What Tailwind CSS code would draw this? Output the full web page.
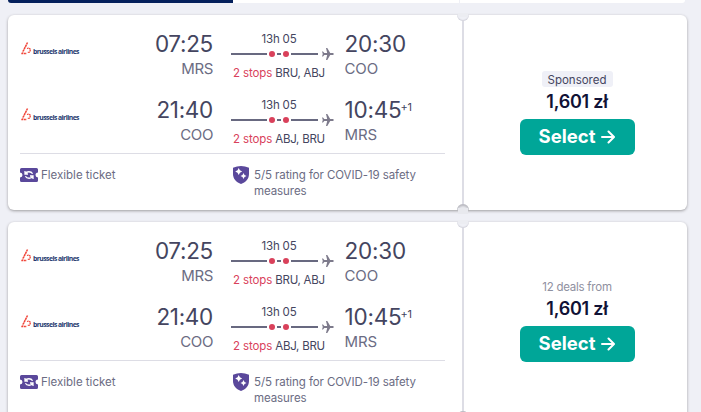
<!DOCTYPE html>
<html lang="en">
<head>
<meta charset="utf-8">
<title>Flights</title>
<script src="https://cdn.jsdelivr.net/npm/@tailwindcss/browser@4"></script>
</head>
<body class="h-[412px] overflow-hidden bg-[#eff0f6] font-[Inter,sans-serif] text-[#444560]">
<svg class="hidden">
  <symbol id="plane" viewBox="0 0 12 12"><path fill="#7d7a8b" d="M4 0h1.300l2.900 5H11l1 1-1 1H8.200L5.300 12H4l1.200-5H2.300L1 8.500H0L.8 6 0 3.500h1L2.300 5h2.900z"/></symbol>
  <symbol id="ticket" viewBox="0 0 18 14"><path fill="#5a489b" d="M1.500 0h15Q18 0 18 1.500v3a2.500 2.500 0 0 0 0 5v3q0 1.500-1.500 1.500h-15Q0 14 0 12.500v-3a2.500 2.500 0 0 0 0-5v-3Q0 0 1.500 0z"/><path fill="none" stroke="#fff" stroke-width="1.300" d="M5 3v3h3M5.300 5.700C6.500 3.300 11 2.900 12.600 5.800M13 11V8h-3M12.700 8.300C11.500 10.700 7 11.100 5.400 8.200"/></symbol>
  <symbol id="shield" viewBox="0 0 16 18"><path fill="#5a489b" d="M0 1.800Q4 0 8 0t8 1.800V8c0 5-3.500 8.500-8 10C3.500 16.500 0 13 0 8z"/><path fill="#fff" d="M5.700 2l1.200 2.300L9.200 5.500 6.900 6.700 5.700 9 4.500 6.700 2.200 5.500l2.300-1.200zM10.500 7l1 2 2 1-2 1-1 2-1-2-2-1 2-1z"/></symbol>
  <symbol id="brand" viewBox="0 0 11 13"><path fill="none" stroke="#f04438" stroke-width="1.500" stroke-dasharray="2.200 .4" d="M6.500.5L1.500 10.500"/><path fill="none" stroke="#f04438" stroke-width="1.300" stroke-dasharray="1.700 .4" d="M6 6.500C8.500 5.500 10 7 9 9S7.500 10.200 6.500 10.400"/><path fill="none" stroke="#f04438" stroke-width="1.700" stroke-dasharray="2 .6" d="M.3 11.500H5.800"/></symbol>
  <symbol id="arrow" viewBox="0 0 14 14"><path fill="none" stroke="#fff" stroke-width="2" stroke-linecap="round" stroke-linejoin="round" d="M1 7h11.500M7.500 1.500L13 7l-5.500 5.500"/></symbol>
</svg>

<div class="flex h-[3px] pl-2">
  <div class="w-[225px] rounded-bl-[3px] bg-[#04205c]"></div>
  <div class="w-[226px] bg-white"></div>
  <div class="w-[226px] rounded-br-[6px] border-l border-[#eff0f6] bg-white"></div>
</div>
<main id="results" class="mt-3 ml-2 flex w-[679px] flex-col gap-3"></main>

<script>
const leg = (dep, from, arr, to, stops, plus) => `
  <div class="flex h-12">
    <div class="flex w-[60px] items-start pt-[12px] pl-px">
      <svg class="h-[13px] w-[11px] shrink-0"><use href="#brand"/></svg>
      <span class="mt-[5px] ml-[1px] text-[6.800px] leading-[10px] font-bold whitespace-nowrap text-[#25396f] font-['Open_Sans',sans-serif] tracking-[-0.540px]">brussels airlines</span>
    </div>
    <div class="w-[133px] text-right">
      <div class="text-[22.500px] leading-7 tracking-[-0.300px]">${dep}</div>
      <div class="mt-px text-[15px] leading-5 tracking-[-0.400px] text-[#6b6c83]">${from}</div>
    </div>
    <div class="ml-[18px] w-[103px] text-[11.500px]">
      <div class="mt-px pr-[7px] text-center leading-[17px] tracking-[-0.200px]">13h 05</div>
      <div class="-mt-px flex h-[14px] items-center">
        <i class="h-[2px] w-[36px] bg-[#686980]"></i>
        <i class="ml-[2px] size-[6px] rounded-full bg-[#d9415b]"></i>
        <i class="mx-[2px] h-[2px] w-[4px] bg-[#686980]"></i>
        <i class="size-[6px] rounded-full bg-[#d9415b]"></i>
        <i class="ml-[2px] h-[2px] w-[27px] bg-[#686980]"></i>
        <svg class="ml-[4px] h-3 w-3"><use href="#plane"/></svg>
      </div>
      <div class="mt-[4px] pl-[2px] leading-[17px] whitespace-nowrap tracking-[-0.260px]"><span class="text-[#d9415b] tracking-[-0.100px]">2 stops</span> ${stops}</div>
    </div>
    <div class="ml-[10.500px]">
      <div class="flex text-[22.500px] leading-7 tracking-[-0.200px]">${arr}<span class="-ml-px text-[11px] leading-[22px]">${plus}</span></div>
      <div class="mt-px text-[15px] leading-5 tracking-[-0.100px] text-[#6b6c83]">${to}</div>
    </div>
  </div>`;

const card = label => `
  <article class="relative flex h-[195px] rounded-[6px] bg-white shadow-[0_1px_3px_rgba(37,32,31,.4)]">
    <section class="w-[454px] pt-[15px] pr-[17px] pl-3">
      <div class="flex flex-col gap-[18px]">
        ${leg('07:25', 'MRS', '20:30', 'COO', 'BRU, ABJ', '')}
        ${leg('21:40', 'COO', '10:45', 'MRS', 'ABJ, BRU', '+1')}
      </div>
      <div class="mt-[9px] flex border-t border-[#dddde5] pt-[13px] text-[11.500px] leading-4 text-[#6b6c83]">
        <div class="flex w-[213px] gap-[3px]"><svg class="mt-px h-[14px] w-[18px]"><use href="#ticket"/></svg><span>Flexible ticket</span></div>
        <div class="flex gap-[5px]"><svg class="mt-[-1px] h-[18px] w-4 shrink-0"><use href="#shield"/></svg><span class="tracking-[-0.080px]">5/5 rating for COVID-19 safety<br>measures</span></div>
      </div>
    </section>
    <div class="w-[2px] bg-[#dddde5]"></div>
    <section class="flex grow flex-col items-center pt-[56px] pl-[3px]">
      ${label}
      <div class="mt-[3px] text-[18px] leading-6 font-semibold tracking-[-0.250px] text-[#111236]">1,601 zł</div>
      <button class="mt-[5px] flex h-9 w-[115px] items-center justify-center gap-[6px] rounded-[6px] bg-[#00a698] text-[18.500px] font-bold text-white"><span>Select</span><svg class="h-[14px] w-[14px]"><use href="#arrow"/></svg></button>
    </section>
    <div class="absolute top-0 left-[449px] h-[6px] w-3 rounded-b-full bg-[#eff0f6] shadow-[inset_0_-1px_1px_#d3d3dc]"></div>
    <div class="absolute -top-[2px] left-[450px] h-[4px] w-[10px] bg-[#ecedf2]"></div>
    <div class="absolute bottom-0 left-[449px] h-[6px] w-3 rounded-t-full bg-[#e8e9ee] shadow-[inset_0_2px_2px_#b9b9c0]"></div>
    <div class="absolute -bottom-[4px] left-[450px] h-[6px] w-[10px] bg-[#e8e9ee]"></div>
  </article>`;

document.getElementById('results').innerHTML =
  card('<div class="h-4 w-[71px] rounded-[3px] bg-[#eff0f7] text-center text-[11.500px] leading-[18px]">Sponsored</div>') +
  card('<div class="h-4 text-center text-[11.500px] leading-[18px] tracking-[-0.250px] text-[#8f90a0]">12 deals from</div>');
</script>
</body>
</html>
